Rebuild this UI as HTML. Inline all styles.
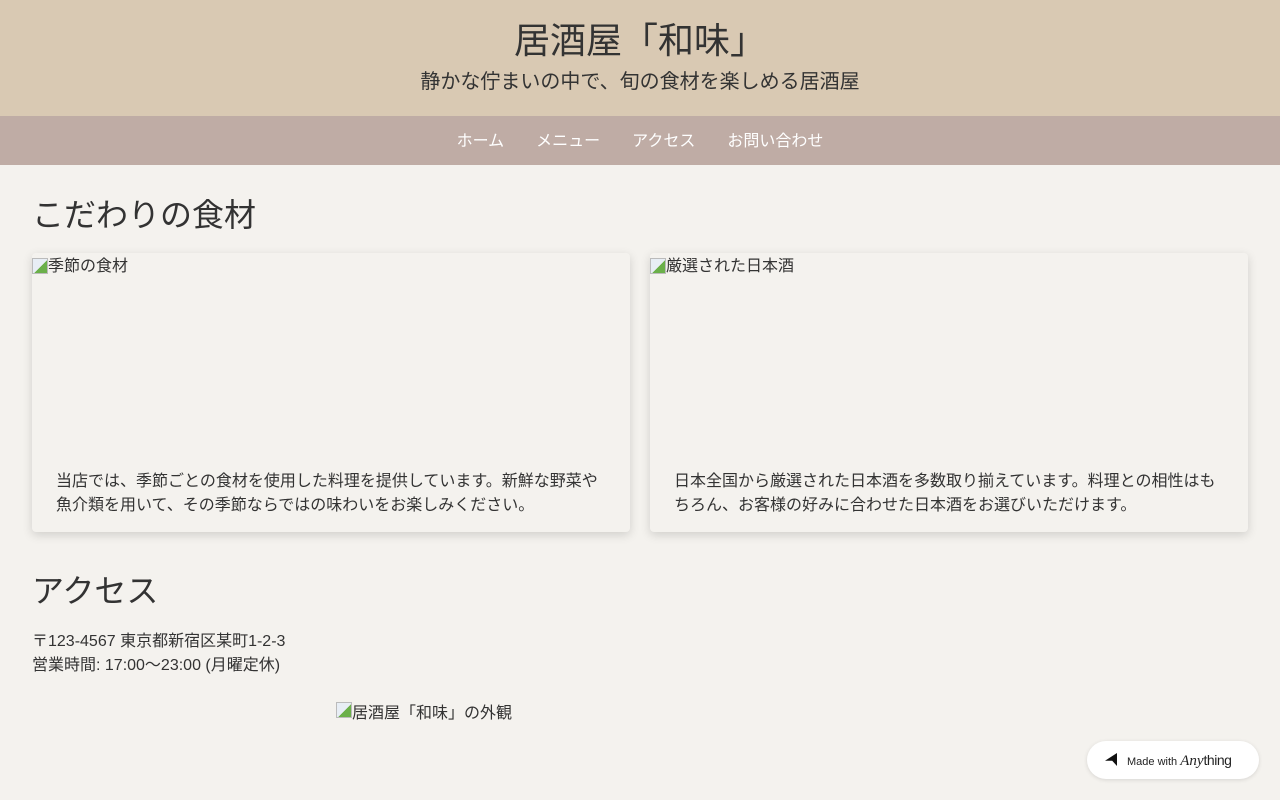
<!DOCTYPE html>
<html><head><meta charset="utf-8"><style>
body{margin:0;background:#f4f2ee;color:#333;font-family:"Liberation Sans","Noto Sans CJK JP",sans-serif;font-size:16px;line-height:24px}
header{background:#d9c9b3;height:116px;text-align:center}
header h1{margin:0;padding-top:17px;font-size:36px;line-height:48px;font-weight:400}
header p{margin:2px 0 0;font-size:20px;line-height:30px}
nav{background:#bfaca5;height:49px;text-align:center;line-height:51px}
nav a{color:#fff;text-decoration:none;margin:0 16px;font-size:16px}
main{padding:0 32px}
h2{font-size:32px;font-weight:400;margin:0;line-height:48px}
.cards{display:flex;gap:20px;margin-top:14px}
.card{flex:1;height:279px;box-shadow:0 3px 10px rgba(0,0,0,.15);border-radius:4px;position:relative}
.img{height:214px;display:flex;align-items:flex-start;padding-top:2px;box-sizing:border-box}
.ic{display:inline-block;width:16px;height:16px;margin-top:3px;background:linear-gradient(135deg,#e8eef5 55%,#6bb04a 55%);border:1px solid #bbb;box-sizing:border-box}
.card p{margin:0;padding:3px 24px 0}
</style></head><body>
<header><h1>居酒屋「和味」</h1><p>静かな佇まいの中で、旬の食材を楽しめる居酒屋</p></header>
<nav><a>ホーム</a><a>メニュー</a><a>アクセス</a><a>お問い合わせ</a></nav>
<main>
<div style="height:26px"></div>
<h2>こだわりの食材</h2>
<div class="cards">
<div class="card"><div class="img"><span class="ic"></span>季節の食材</div><p>当店では、季節ごとの食材を使用した料理を提供しています。新鮮な野菜や魚介類を用いて、その季節ならではの味わいをお楽しみください。</p></div>
<div class="card"><div class="img"><span class="ic"></span>厳選された日本酒</div><p>日本全国から厳選された日本酒を多数取り揃えています。料理との相性はもちろん、お客様の好みに合わせた日本酒をお選びいただけます。</p></div>
</div>
<h2 style="margin-top:35px">アクセス</h2>
<p style="margin:15px 0 0">〒123-4567 東京都新宿区某町1-2-3<br>営業時間: 17:00〜23:00 (月曜定休)</p>
<div style="margin:21px 0 0 304px"><span class="ic"></span>居酒屋「和味」の外観</div>
</main>
<div style="position:fixed;left:1087px;top:741px;width:172px;height:38px;background:#fff;border-radius:19px;box-shadow:0 1px 4px rgba(0,0,0,.12);font-size:11px;line-height:38px;color:#222">
<span style="position:absolute;left:18px;top:12px;width:12px;height:13px;background:#111;clip-path:polygon(100% 0,100% 100%,60% 60%,0 60%)"></span>
<span style="position:absolute;left:40px">Made with <i style="font-family:'Liberation Serif',serif;font-size:15px">Any</i><span style="font-size:14px;letter-spacing:-.5px">thing</span></span></div>
</body></html>
